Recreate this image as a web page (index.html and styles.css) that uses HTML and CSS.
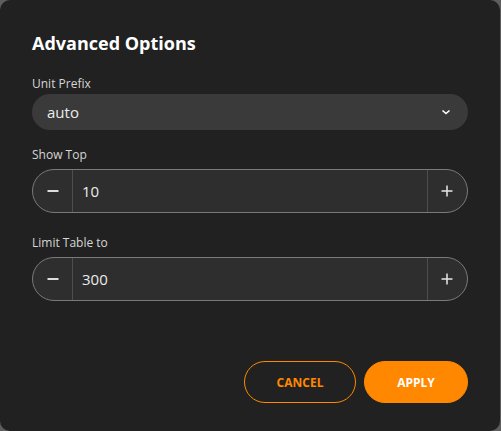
FILE: index.html
```html
<!DOCTYPE html>
<html>
<head>
<meta charset="utf-8">
<link rel="stylesheet" href="styles.css">
</head>
<body>
<div class="dialog">
  <h2 class="title">Advanced Options</h2>
  <div class="field first">
    <label class="label">Unit Prefix</label>
    <div class="select">
      <span class="select-value">auto</span>
      <svg class="chevron" width="10" height="6" viewBox="0 0 10 6"><polyline points="1.5,1.5 5,4.5 8.5,1.5" fill="none" stroke="#ffffff" stroke-width="1.6"/></svg>
    </div>
  </div>
  <div class="field second">
    <label class="label">Show Top</label>
    <div class="stepper">
      <div class="step minus"><svg width="12" height="12" viewBox="0 0 12 12"><rect x="0.5" y="5" width="11" height="2" fill="#dddddd"/></svg></div>
      <div class="value">10</div>
      <div class="step plus"><svg width="12" height="12" viewBox="0 0 12 12"><rect x="0.5" y="5.2" width="11" height="1.6" fill="#dddddd"/><rect x="5.2" y="0.5" width="1.6" height="11" fill="#dddddd"/></svg></div>
    </div>
  </div>
  <div class="field third">
    <label class="label">Limit Table to</label>
    <div class="stepper">
      <div class="step minus"><svg width="12" height="12" viewBox="0 0 12 12"><rect x="0.5" y="5" width="11" height="2" fill="#dddddd"/></svg></div>
      <div class="value">300</div>
      <div class="step plus"><svg width="12" height="12" viewBox="0 0 12 12"><rect x="0.5" y="5.2" width="11" height="1.6" fill="#dddddd"/><rect x="5.2" y="0.5" width="1.6" height="11" fill="#dddddd"/></svg></div>
    </div>
  </div>
  <div class="actions">
    <button class="btn cancel">CANCEL</button>
    <button class="btn apply">APPLY</button>
  </div>
</div>
</body>
</html>
```
FILE: styles.css
```css
html, body {
  margin: 0;
  padding: 0;
  background: #5e5e5e;
  font-family: "Open Sans", "Noto Sans", sans-serif;
}
.dialog {
  box-sizing: border-box;
  width: 500px;
  height: 431px;
  background: #212121;
  border-radius: 10px;
  padding: 31px 32px 28px 32px;
  display: flex;
  flex-direction: column;
}
.title {
  margin: 0;
  font-size: 18px;
  line-height: 24px;
  font-weight: 700;
  color: #ffffff;
}
.field {
  display: flex;
  flex-direction: column;
}
.field.first { margin-top: 21px; }
.field.second { margin-top: 17px; }
.field.third { margin-top: 22px; }
.label {
  font-size: 12px;
  line-height: 16px;
  color: #d6d6d6;
  margin-bottom: 6px;
}
.field.first .label { margin-bottom: 2px; }
.select {
  height: 36px;
  border-radius: 18px;
  background: #3a3a3a;
  display: flex;
  align-items: center;
  justify-content: space-between;
  padding: 0 17px 0 15px;
}
.select-value {
  font-size: 15px;
  color: #ececec;
}
.chevron { display: block; }
.stepper {
  box-sizing: border-box;
  height: 44px;
  border: 1px solid #7a7a7a;
  border-radius: 22px;
  background: #2e2e2e;
  display: flex;
  overflow: hidden;
}
.step {
  box-sizing: border-box;
  width: 40px;
  display: flex;
  align-items: center;
  justify-content: center;
}
.step svg { display: block; }
.minus { border-right: 1px solid #4e4e4e; padding-left: 1px; }
.plus { border-left: 1px solid #4e4e4e; padding-right: 1px; }
.value {
  flex: 1;
  display: flex;
  align-items: center;
  padding-left: 9px;
  font-size: 15px;
  color: #ececec;
}
.actions {
  margin-top: auto;
  display: flex;
  justify-content: flex-end;
  gap: 8px;
}
.btn {
  box-sizing: border-box;
  height: 42px;
  border-radius: 21px;
  font-family: "Open Sans", "Noto Sans", sans-serif;
  font-size: 12px;
  font-weight: 700;
  padding: 0;
  cursor: pointer;
}
.cancel {
  width: 112px;
  background: transparent;
  border: 1px solid #ff8800;
  color: #ff8800;
}
.apply {
  width: 104px;
  background: #ff8800;
  border: 1px solid #ff8800;
  color: #ffffff;
}
```
